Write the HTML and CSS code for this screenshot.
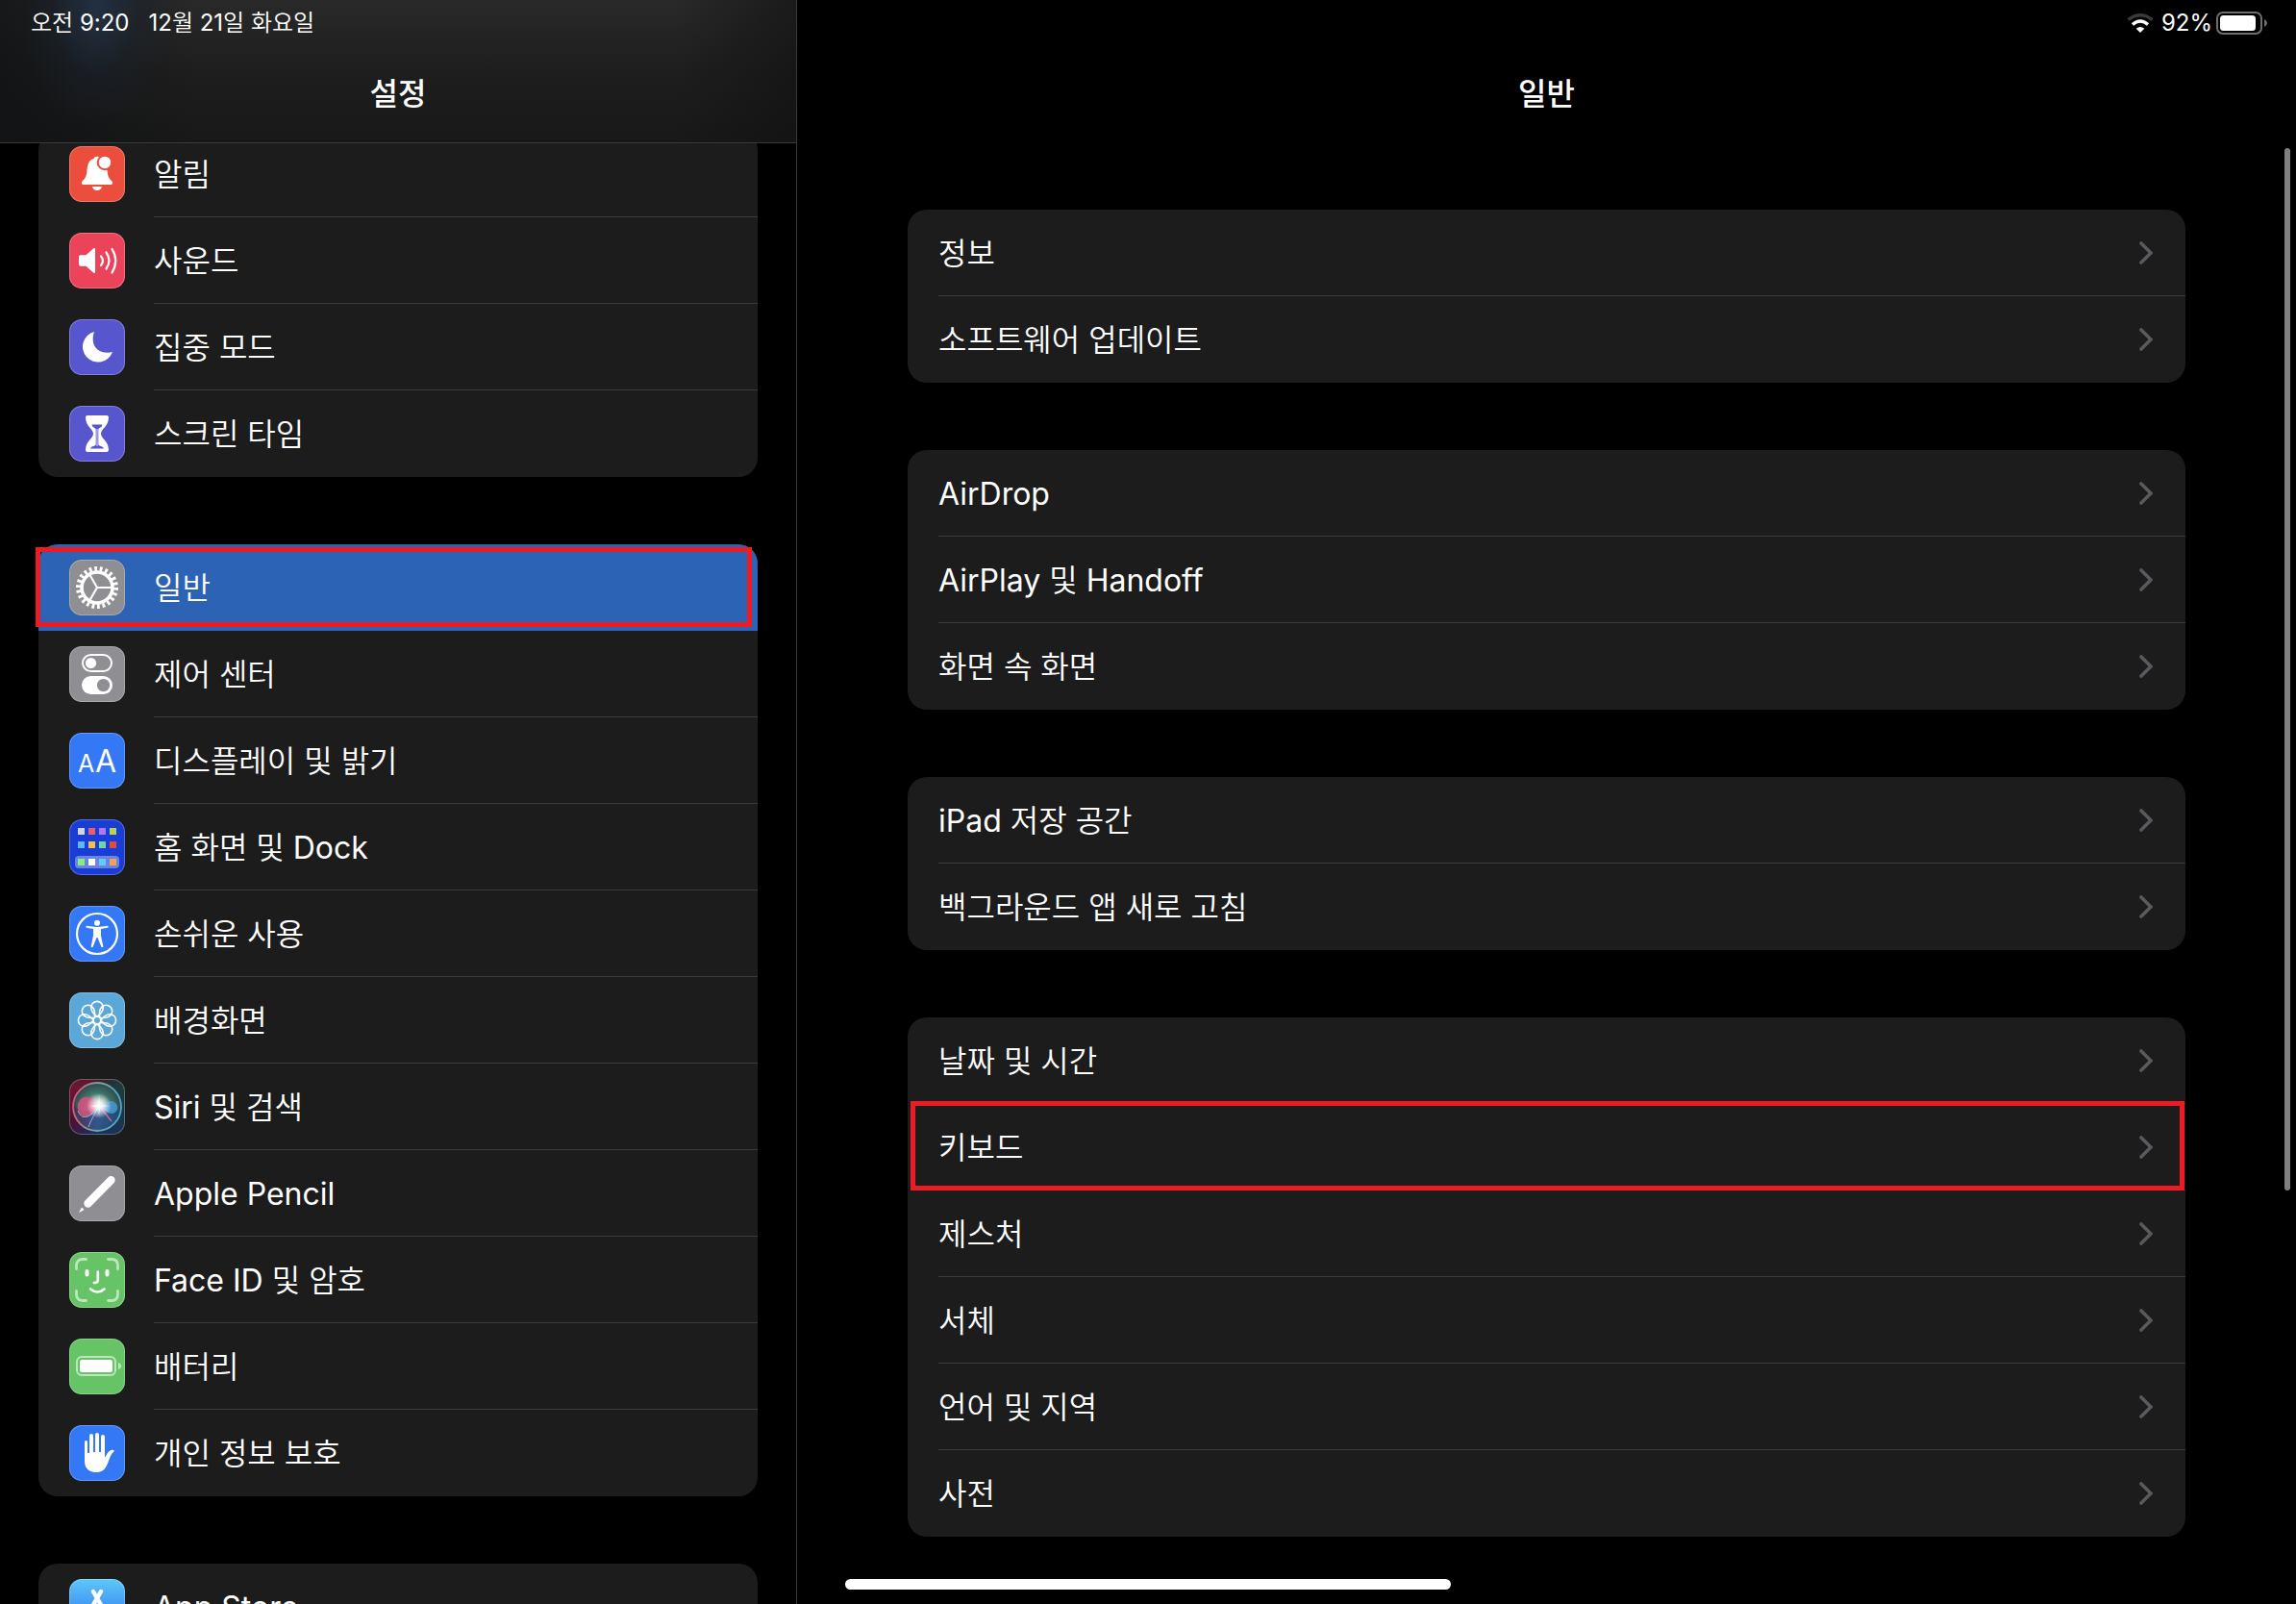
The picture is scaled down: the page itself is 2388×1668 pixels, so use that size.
FILE: index.html
```html
<!DOCTYPE html>
<html lang="ko">
<head>
<meta charset="utf-8">
<meta name="viewport" content="width=device-width, initial-scale=1">
<title>설정</title>
<link rel="stylesheet" href="styles.css">
</head>
<body>
<svg class="defs" aria-hidden="true">
  <defs>
    <symbol id="chevron" viewBox="0 0 14 24"><path d="M2 2l10 10L2 22" fill="none" stroke="#5a5a5e" stroke-width="3.6" stroke-linecap="round" stroke-linejoin="miter"/></symbol>
    <path id="petal" d="M29 25.200C25.500 22.500 22.700 19 22.700 15.700A6.300 6.300 0 1 1 35.300 15.700C35.300 19 32.500 22.500 29 25.200"/>
  </defs>
</svg>
<div class="screen">
  <aside class="sidebar">
    <header class="sidebar-header">
      <div class="status"><span>오전 9:20</span><span>12월 21일 화요일</span></div>
      <h1 class="title">설정</h1>
    </header>
    <nav class="sidebar-list" aria-label="설정">
      <ul class="group">
        <li><a class="row" href="#"><svg class="icon red" viewBox="0 0 58 58"><path fill="#fff" d="M15 40c-2.500 0-2.700-2.500-1-4 3-2.800 4-5 4.500-11 .6-7.500 3-11 7-12 .8-3 6-3 6.800-.5L36 25h3.500c.6 6 1.500 8.200 4.500 11 1.700 1.500 1.500 4-1 4zM24 42h10c-.6 2.600-2.500 4-5 4s-4.400-1.400-5-4z"/><circle cx="37" cy="17" r="8.300" fill="#eb4e3d"/><circle cx="37" cy="17" r="6.200" fill="#fff"/></svg><span class="label">알림</span></a></li>
        <li><a class="row" href="#"><svg class="icon pink" viewBox="0 0 58 58"><path fill="#fff" d="M12 23.300h5.500l7.500-6.800c1-.8 2-.4 2 .8v23.400c0 1.200-1 1.600-2 .8l-7.500-6.800H12c-1.300 0-2-.7-2-2v-7.400c0-1.300.7-2 2-2z"/><g fill="none" stroke="#fff" stroke-width="2.200" stroke-linecap="round"><path d="M33 24.500q4 4.500 0 9.500M38.500 20.500q6 8.500 0 17M44.500 17q7.500 12 0 24.500"/></g></svg><span class="label">사운드</span></a></li>
        <li><a class="row" href="#"><svg class="icon indigo" viewBox="0 0 58 58"><path fill="#fff" d="M26 13A16 16 0 1 0 45 34C35 37 20 31 26 13z"/></svg><span class="label">집중 모드</span></a></li>
        <li><a class="row" href="#"><svg class="icon indigo" viewBox="0 0 58 58"><path fill="#fff" d="M19 10h20c1.500 0 2 1 2 2.500C40.500 22 33 24 33 29s7.500 7 8 16.500c0 1.500-.5 2.500-2 2.500H19c-1.500 0-2-1-2-2.500C17.500 36 25 34 25 29s-7.500-7-8-16.500c0-1.500.5-2.500 2-2.500z"/><path fill="#5856ce" d="M23.500 19.500h11l-1 2.500c-1.500 1-3.200 1-3.200 3v15c0 2 4.500 1.500 5.700 4.500H22c1.200-3 5.700-2.500 5.700-4.500V25c0-2-1.700-2-3.200-3z"/><path stroke="#fff" stroke-width=".8" d="M29 24v18"/></svg><span class="label">스크린 타임</span></a></li>
      </ul>
      <ul class="group">
        <li><a class="row selected" href="#" aria-current="page"><svg class="icon gray" viewBox="0 0 58 58"><g fill="none" stroke="#fff"><circle cx="29" cy="29" r="19.500" stroke-width="5" pathLength="44" stroke-dasharray="1 1"/><circle cx="29" cy="29" r="16" stroke-width="3.600"/><path stroke-width="2.200" d="M29 29h15M29 29l-7.500-13M29 29l-7.500 13"/></g></svg><span class="label">일반</span><span class="marker marker-side"></span></a></li>
        <li><a class="row" href="#"><svg class="icon gray" viewBox="0 0 58 58"><rect x="14" y="9" width="30" height="17" rx="8.500" fill="none" stroke="#fff" stroke-width="2"/><circle cx="22.500" cy="17.500" r="5.600" fill="#fff"/><rect x="13" y="31" width="32" height="19" rx="9.500" fill="#fff"/><circle cx="35.500" cy="40.500" r="6.600" fill="#8e8e93"/></svg><span class="label">제어 센터</span></a></li>
        <li><a class="row" href="#"><svg class="icon blue" viewBox="0 0 58 58"><g class="glyph"><text x="9" y="41" font-size="25">A</text><text x="27" y="41" font-size="32">A</text></g></svg><span class="label">디스플레이 및 밝기</span></a></li>
        <li><a class="row" href="#"><svg class="icon navy" viewBox="0 0 58 58"><rect x="6" y="38" width="46" height="13" rx="4" fill="#6a84e2"/><path fill="#d5d5d5" d="M9 9h7v7H9z"/><path fill="#eb5d6b" d="M20 9h7v7h-7z"/><path fill="#b077f2" d="M31 9h7v7h-7z"/><path fill="#b9d351" d="M42 9h7v7h-7z"/><path fill="#5abaf5" d="M9 23h7v7H9z"/><path fill="#f5c043" d="M20 23h7v7h-7z"/><path fill="#6fd6a6" d="M31 23h7v7h-7z"/><path fill="#e74a3b" d="M42 23h7v7h-7z"/><path fill="#85ee83" d="M9 41h7v7H9z"/><path fill="#fff" d="M20 41h7v7h-7z"/><path fill="#62cbfb" d="M31 41h7v7h-7z"/><path fill="#f2a257" d="M42 41h7v7h-7z"/></svg><span class="label">홈 화면 및 Dock</span></a></li>
        <li><a class="row" href="#"><svg class="icon blue" viewBox="0 0 58 58"><circle cx="29" cy="29" r="21" fill="none" stroke="#fff" stroke-width="2.200"/><circle cx="29" cy="17.700" r="3" fill="#fff"/><path fill="#fff" d="M18.500 20.800q10.500 2.200 21 0c1.400-.2 1.700 1.700.4 2L33 24v7l2.300 11c.2 1.300-1.600 1.600-2 .4L29.500 33h-1l-3.800 9.400c-.4 1.200-2.200.9-2-.4L25 31v-7l-6.900-1.200c-1.300-.3-1-2.200.4-2z"/></svg><span class="label">손쉬운 사용</span></a></li>
        <li><a class="row" href="#"><svg class="icon sky" viewBox="0 0 58 58"><g fill="none" stroke="#fff" stroke-width="1.600"><use href="#petal"/><use href="#petal" transform="rotate(45 29 29)"/><use href="#petal" transform="rotate(90 29 29)"/><use href="#petal" transform="rotate(135 29 29)"/><use href="#petal" transform="rotate(180 29 29)"/><use href="#petal" transform="rotate(225 29 29)"/><use href="#petal" transform="rotate(270 29 29)"/><use href="#petal" transform="rotate(315 29 29)"/><circle cx="29" cy="29" r="3.800"/></g></svg><span class="label">배경화면</span></a></li>
        <li><a class="row" href="#"><svg class="icon siri" viewBox="0 0 58 58"><defs><linearGradient id="siri-ring" x1="0" y1="0.400" x2="1" y2="0.600"><stop offset="0" stop-color="#d8557b"/><stop offset="0.500" stop-color="#78a596"/><stop offset="1" stop-color="#4aa8d4"/></linearGradient><radialGradient id="siri-orb"><stop offset="0" stop-color="#b5d0c8"/><stop offset="0.600" stop-color="#3f7267"/><stop offset="1" stop-color="#284a4b"/></radialGradient><radialGradient id="siri-glow"><stop offset="0" stop-color="#fff"/><stop offset="0.300" stop-color="#fff" stop-opacity="0.850"/><stop offset="1" stop-color="#fff" stop-opacity="0"/></radialGradient><linearGradient id="siri-low" x1="0" y1="0" x2="1" y2="0"><stop offset="0" stop-color="#5c2450"/><stop offset="0.500" stop-color="#33538f"/><stop offset="1" stop-color="#1d4a74"/></linearGradient></defs><circle cx="29" cy="29" r="25" fill="url(#siri-orb)"/><path fill="url(#siri-low)" opacity=".9" d="M5 27c8 12 16 5 25 1 8 7 15 9 23 3-3 15-14 22-24 22S7 45 5 27z"/><path fill="#d9527f" opacity=".85" d="M31 28c-5-8-12-12-18-8-7 5-5 16 2 19 7 2 12-5 16-11z"/><path fill="#4596d6" opacity=".85" d="M31 28c5-2 10-7 16-4 6 4 3 12-3 12-5 0-8-5-13-8z"/><path fill="none" stroke="#7cc0d4" d="M9 33c5 13 16 4 22-5M20 50c3-8 7-15 11-22"/><path stroke="#c9688f" stroke-width="1.400" d="M31 28l13 16"/><circle cx="31" cy="28" r="13" fill="url(#siri-glow)"/><path fill="#fff" opacity=".6" d="M31 16l1 11 10 1-10 1.500L31 39l-1-9.500-9-1.500 9-1z"/><circle cx="29" cy="29" r="25" fill="none" stroke="url(#siri-ring)" stroke-width="1.800"/></svg><span class="label">Siri 및 검색</span></a></li>
        <li><a class="row" href="#"><svg class="icon gray" viewBox="0 0 58 58"><path stroke="#fff" stroke-width="8.400" stroke-linecap="round" d="M19.500 39.500L43.500 15.300"/><path fill="#fff" d="M10 49l2.800-5.300c1.300.3 2.200 1.200 2.500 2.500z"/></svg><span class="label">Apple Pencil</span></a></li>
        <li><a class="row" href="#"><svg class="icon green" viewBox="0 0 58 58"><g fill="none" stroke="#fff" stroke-linecap="round"><path stroke="#bde6bd" stroke-width="2.800" d="M7.500 17.500V14q0-6.500 6.500-6.500h3.500M40.500 7.500H44q6.500 0 6.500 6.500v3.500M50.500 40.500V44q0 6.500-6.500 6.500h-3.500M17.500 50.500H14q-6.500 0-6.500-6.500v-3.500"/><path stroke-width="4" d="M18.500 20v3.500M39.500 20v3.500"/><path stroke-width="2.600" d="M29.800 20.500V29q0 3-3.800 3M22 38.500q7.500 6 14.500 0"/></g></svg><span class="label">Face ID 및 암호</span></a></li>
        <li><a class="row" href="#"><svg class="icon green" viewBox="0 0 58 58"><rect x="8" y="19" width="40" height="19" rx="5" fill="none" stroke="#bde6bd" stroke-width="2"/><rect x="11" y="22" width="34" height="13" rx="2.500" fill="#fff"/><path fill="#bde6bd" d="M51 25q3 1 3 3.500t-3 3.500z"/></svg><span class="label">배터리</span></a></li>
        <li><a class="row" href="#"><svg class="icon blue" viewBox="0 0 58 58"><path fill="#fff" d="M16 17.500c0-2 3-2 3 0V29h2V11c0-2.700 4-2.700 4 0v17h2V10c0-2.700 4-2.700 4 0v18h2V12c0-2.700 4-2.700 4 0v21.500c2.500-3 3-7 7.500-7.800 2-.3 3 1 1.500 2.300-4.500 4-4.500 11-8.500 16.500-2.500 3.500-5.500 4.500-9.500 4.500-7.500 0-12-4-12-12z"/></svg><span class="label">개인 정보 보호</span></a></li>
      </ul>
      <ul class="group">
        <li><a class="row" href="#"><svg class="icon store" viewBox="0 0 58 58"><path fill="none" stroke="#fff" stroke-width="4.400" stroke-linecap="round" d="M25 13l15.500 27M33 13L20 35.500M11 35.500h22M39 35.500h8M17.500 40.500l-1.500 2.500"/></svg><span class="label">App Store</span></a></li>
      </ul>
    </nav>
  </aside>
  <main class="detail">
    <div class="status status-end">
      <svg class="wifi" viewBox="0 0 28 20" aria-hidden="true"><g fill="none" stroke="#fff" stroke-width="3.400"><path stroke="#3a3a3a" d="M1.500 6.500q12.500-9.500 25 0"/><path d="M6 11.500q8-7 16 0"/></g><path fill="#fff" d="M14 20l-4.300-4.200q4.300-3.600 8.600 0z"/></svg>
      <span>92%</span>
      <svg class="battery" viewBox="0 0 54 24" aria-hidden="true"><rect x="1" y="1" width="46" height="22" rx="6" fill="none" stroke="#6e6e6e" stroke-width="2"/><rect x="4" y="4" width="37" height="16" rx="3.500" fill="#fff"/><path fill="#6e6e6e" d="M50 8q3 1.500 3 4t-3 4z"/></svg>
    </div>
    <h2 class="title">일반</h2>
    <div class="detail-list">
      <ul class="group">
        <li><a class="row" href="#"><span class="label">정보</span><svg class="chevron"><use href="#chevron"/></svg></a></li>
        <li><a class="row" href="#"><span class="label">소프트웨어 업데이트</span><svg class="chevron"><use href="#chevron"/></svg></a></li>
      </ul>
      <ul class="group">
        <li><a class="row" href="#"><span class="label">AirDrop</span><svg class="chevron"><use href="#chevron"/></svg></a></li>
        <li><a class="row" href="#"><span class="label">AirPlay 및 Handoff</span><svg class="chevron"><use href="#chevron"/></svg></a></li>
        <li><a class="row" href="#"><span class="label">화면 속 화면</span><svg class="chevron"><use href="#chevron"/></svg></a></li>
      </ul>
      <ul class="group">
        <li><a class="row" href="#"><span class="label">iPad 저장 공간</span><svg class="chevron"><use href="#chevron"/></svg></a></li>
        <li><a class="row" href="#"><span class="label">백그라운드 앱 새로 고침</span><svg class="chevron"><use href="#chevron"/></svg></a></li>
      </ul>
      <ul class="group">
        <li><a class="row" href="#"><span class="label">날짜 및 시간</span><svg class="chevron"><use href="#chevron"/></svg></a></li>
        <li><a class="row" href="#"><span class="label">키보드</span><svg class="chevron"><use href="#chevron"/></svg><span class="marker marker-detail"></span></a></li>
        <li><a class="row" href="#"><span class="label">제스처</span><svg class="chevron"><use href="#chevron"/></svg></a></li>
        <li><a class="row" href="#"><span class="label">서체</span><svg class="chevron"><use href="#chevron"/></svg></a></li>
        <li><a class="row" href="#"><span class="label">언어 및 지역</span><svg class="chevron"><use href="#chevron"/></svg></a></li>
        <li><a class="row" href="#"><span class="label">사전</span><svg class="chevron"><use href="#chevron"/></svg></a></li>
      </ul>
    </div>
    <div class="scroll-thumb"></div>
  </main>
  <div class="home-indicator"></div>
</div>
</body>
</html>
```
FILE: styles.css
```css
* {
  box-sizing: border-box;
}

body {
  margin: 0;
  background: #000;
  color: #fff;
  font-family: Inter, "Noto Sans CJK KR DemiLight", "Noto Sans CJK KR", sans-serif;
  font-size: 32px;
  line-height: 40px;
}

ul {
  list-style: none;
  margin: 0;
  padding: 0;
}

.defs {
  position: absolute;
  width: 0;
  height: 0;
}

.screen {
  position: relative;
  display: grid;
  grid-template-columns: minmax(400px, 829fr) 1559fr;
  height: 100vh;
  overflow: hidden;
}

/* Panes */
.sidebar {
  min-height: 0;
  overflow: hidden;
  border-right: 1px solid #38383a;
}

.sidebar-header {
  position: relative;
  z-index: 1;
  border-bottom: 1px solid #3a3a3a;
  background:
    radial-gradient(ellipse 80px 120px at 100px 10px, rgba(34, 54, 78, 0.75), rgba(28, 38, 52, 0.35) 55%, transparent),
    linear-gradient(90deg, rgba(14, 17, 19, 0.7), transparent 25%, transparent 85%, rgba(17, 17, 17, 0.6)),
    linear-gradient(#292929, #1e1e1e 50%, #181818);
}

.detail {
  position: relative;
  min-height: 0;
}

.status {
  display: flex;
  align-items: center;
  gap: 20px;
  height: 48px;
  padding: 0 32px;
  font-size: 24px;
  line-height: 32px;
}

.status-end {
  justify-content: flex-end;
  gap: 4px;
  padding: 0 29px;
}

.wifi {
  width: 28px;
  height: 20px;
  margin-right: 4px;
}

.battery {
  width: 54px;
  height: 24px;
}

.title {
  height: 100px;
  margin: 0;
  font-family: Inter, "Noto Sans CJK KR Medium", "Noto Sans CJK KR", sans-serif;
  font-size: 32px;
  line-height: 100px;
  font-weight: 500;
  text-align: center;
}

/* Grouped lists */
.sidebar-list,
.detail-list {
  display: flex;
  flex-direction: column;
  gap: 70px;
}

.sidebar-list {
  margin-top: -13px;
  padding: 0 40px;
}

.detail-list {
  padding: 70px 115px 0;
}

.group {
  border-radius: 20px;
  background: #1c1c1c;
}

.row {
  position: relative;
  display: flex;
  align-items: center;
  gap: 30px;
  height: 90px;
  padding-left: 32px;
  color: inherit;
  text-decoration: none;
}

.label {
  display: flex;
  flex: 1;
  align-items: center;
  height: 100%;
  padding-top: 2px;
  border-bottom: 1px solid #3a3a3a;
}

li:last-child .label,
.selected .label {
  border-bottom-color: transparent;
}

.selected {
  border-radius: 20px 20px 0 0;
  background: #2c63b5;
}

/* Pulled back over the label so the separator runs to the card's edge */
.chevron {
  width: 14px;
  height: 24px;
  margin-right: 34px;
  margin-left: -78px;
}

/* Red call-outs drawn around a row */
.marker {
  position: absolute;
  border: 5px solid #ed1c24;
  pointer-events: none;
}

.marker-side {
  inset: 3px 6px 4px -3px;
}

.marker-detail {
  inset: -3px 1px 0 3px;
}

/* Row icons */
.icon {
  width: 58px;
  height: 58px;
  border-radius: 13px;
  box-shadow: inset 0 0 0 1px rgba(255, 255, 255, 0.25);
}

.red { background: #eb4e3d; }
.pink { background: #eb445a; }
.indigo { background: #5856ce; }
.gray { background: #8e8e93; }
.blue { background: #3478f6; }
.navy { background: #1a3dd6; }
.sky { background: #5aa7d8; }
.green { background: #67c466; }
.store { background: linear-gradient(#5ec8f8, #2465ec); }
.siri { background: conic-gradient(from 45deg, #1d3b3a, #1a3550 25%, #1c2c66 40%, #4d1030 55%, #6a1732 75%, #3d1f2b 90%, #1d3b3a); }

.glyph {
  fill: #fff;
  font-family: Inter, sans-serif;
  font-weight: 400;
}

/* Overlays */
.scroll-thumb {
  position: absolute;
  top: 154px;
  right: 6px;
  width: 6px;
  height: 65%;
  border-radius: 3px;
  background: #7f7f7f;
}

.home-indicator {
  position: absolute;
  bottom: 15px;
  left: 50%;
  width: 630px;
  height: 11px;
  margin-left: -315px;
  border-radius: 6px;
  background: #fff;
}
```
